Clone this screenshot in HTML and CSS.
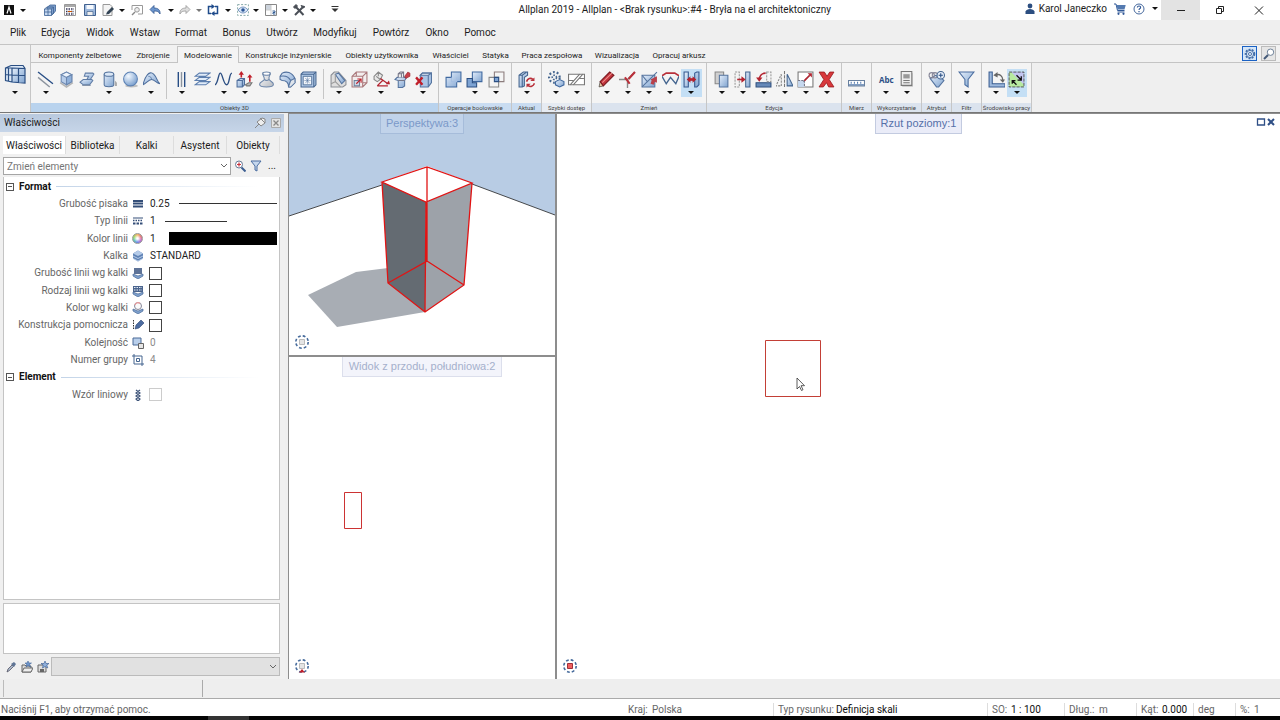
FILE: index.html
```html
<!DOCTYPE html>
<html lang="pl">
<head>
<meta charset="utf-8">
<title>Allplan 2019</title>
<link rel="stylesheet" href="styles.css">
</head>
<body>
<svg class="defs" aria-hidden="true">
  <defs>
    <linearGradient id="bl" x1="0" y1="0" x2="1" y2="1"><stop offset="0" stop-color="#e4eefb"/><stop offset="1" stop-color="#7fa3cf"/></linearGradient>
    <linearGradient id="gr" x1="0" y1="0" x2="1" y2="1"><stop offset="0" stop-color="#fff"/><stop offset="1" stop-color="#b4b8be"/></linearGradient>
    <radialGradient id="ball" cx=".35" cy=".3" r=".8"><stop offset="0" stop-color="#f2f8ff"/><stop offset="1" stop-color="#6f97c9"/></radialGradient>
    <symbol id="orbit" viewBox="0 0 16 16"><circle cx="8" cy="8" r="6.2" fill="none" stroke="#456a9b" stroke-width="1.6" stroke-dasharray="2.8 2.07"/></symbol>
    <symbol id="layer" viewBox="0 0 12 12"><path d="M1 7l5 2 5-2v2l-5 3-5-3z" fill="#7d9fcc" stroke="#4a6a98" stroke-width=".7"/></symbol>
  </defs>
</svg>
<div class="app">
  <header class="titlebar">
    <div class="quick">
      <button aria-label="Allplan"><svg class="i12" viewBox="0 0 12 12"><path fill="#111" d="M1 1h10v10H1z"/><path d="M4 9.5L6 3l2 6.500" fill="none" stroke="#fff" stroke-width="1.2"/></svg></button>
      <button class="arr" aria-label="Menu"></button>
      <i></i>
      <button aria-label="Projekt"><svg class="i12" viewBox="0 0 12 12"><path d="M3 3.500l3-2.500h5.500v6l-2.500 3H3z" fill="#7f9fcb" stroke="#3c6294" stroke-width=".8"/><path d="M.5 5h7v6.500h-7z" fill="#c5d8f0" stroke="#3c6294" stroke-width=".8"/><path d="M.5 5L3 3h6.500L7.500 5M9.500 3v6.500L7.500 11.500M.5 8h7M4 5v6.500" stroke="#3c6294" stroke-width=".8" fill="none"/></svg></button>
      <button aria-label="Rysunki"><svg class="i12" viewBox="0 0 12 12"><path d="M.5.5h11v11H.5z" fill="#fff" stroke="#999"/><path d="M1 2h10" stroke="#aaa" stroke-width="2"/><path d="M2 5h8M2 7.500h8M2 10h8" stroke="#335" stroke-width="1.500" stroke-dasharray="1.500 1"/><path d="M4 7.500h4" stroke="#c50"/></svg></button>
      <button aria-label="Zapisz"><svg class="i12" viewBox="0 0 12 12"><path d="M.5.5h11v11H.5z" fill="#9db8dc" stroke="#41618f"/><path d="M2.500 1h7v4h-7z" fill="#f6f9fd"/><path d="M3 7.500h6v4H3z" fill="#eee" stroke="#41618f" stroke-width=".7"/></svg></button>
      <button aria-label="Edytuj"><svg class="i12" viewBox="0 0 12 12"><path d="M1 .500h7l2 2v9H1z" fill="#f4f4f4" stroke="#999"/><path d="M5 8l5-5 2 2-5 5-3 .5z" fill="#345"/></svg></button>
      <button class="arr" aria-label="Więcej"></button>
      <button aria-label="Podgląd"><svg class="i12" viewBox="0 0 12 12"><path d="M1 6V1.500h10.500V10H7" fill="#fff" stroke="#999"/><path d="M1 11l3-3" stroke="#888" stroke-width="1.500"/><circle cx="6" cy="5.800" r="2.300" fill="#eee" stroke="#999"/></svg></button>
      <button aria-label="Cofnij"><svg class="i12" viewBox="0 0 12 12"><path d="M1 5.500L5 1.500v2.500c4 0 6.500 2 6 6C10 7.500 8 7 5 7v2.500z" fill="#6c95cd" stroke="#34588f" stroke-width=".8"/></svg></button>
      <button class="arr" aria-label="Lista cofania"></button>
      <button aria-label="Ponów"><svg class="i12" viewBox="0 0 12 12"><path d="M11 5.500L7 1.500v2.500C3 4 .5 6 1 10c1-2.500 3-3 6-3v2.500z" fill="#ddd" stroke="#999" stroke-width=".8"/></svg></button>
      <button class="arr pale" aria-label="Lista ponawiania"></button>
      <button aria-label="Odśwież"><svg class="i12" viewBox="0 0 12 12"><path d="M5 2.500H1.500v7H4M7 9.500h3.500v-7H8" fill="none" stroke="#1f4b8b" stroke-width="1.500"/><path d="M4.500 0v5L8 2.500zM7.500 7v5L4 9.500z" fill="#1f4b8b"/></svg></button>
      <button class="arr" aria-label="Więcej"></button>
      <button aria-label="Widoczność"><svg class="i12" viewBox="0 0 12 12"><path d="M.6.600h10.800v10.800H.6z" fill="none" stroke="#8aa" stroke-dasharray="2 1.500"/><path d="M1 6c3-4 7-4 10 0-3 4-7 4-10 0z" fill="#d8e6f7" stroke="#5a7eb0" stroke-width=".8"/><circle cx="6" cy="6" r="1.800" fill="#2a5596"/></svg></button>
      <button class="arr" aria-label="Więcej"></button>
      <button aria-label="Okna"><svg class="i12" viewBox="0 0 12 12"><path d="M.5.500h11v11H.5z" fill="#fff" stroke="#888"/><path d="M1 1h5v5H1z" fill="#ccd3dc"/><path d="M6 1v10M1 6h5" stroke="#ccc"/><path d="M7.500 7H10v1.500H8V10h2.500" fill="none" stroke="#335c94"/></svg></button>
      <button class="arr" aria-label="Więcej"></button>
      <button aria-label="Opcje"><svg class="i12" viewBox="0 0 12 12"><path d="M2 11l8-8M2 2l8.500 9" stroke="#4a4f57" stroke-width="2"/><path d="M.5 3L3 .5l1.500 1.500-2.500 2.500zM8 1l1 2 2 1 .5-2" fill="#4a4f57" stroke="#4a4f57"/></svg></button>
      <button class="arr" aria-label="Więcej"></button>
      <i></i>
      <button aria-label="Dostosuj pasek"><svg class="i12" viewBox="0 0 12 12"><path d="M2.500 2.500h7" stroke="#333"/><path d="M2.500 4.500h7L6 8z" fill="#333"/></svg></button>
    </div>
    <h1>Allplan 2019 - Allplan - &lt;Brak rysunku&gt;:#4 - Bryła na el architektoniczny</h1>
    <div class="account">
      <svg class="i12" viewBox="0 0 12 12"><circle cx="6" cy="3" r="2.400" fill="#2c4e80"/><path d="M1.500 11V8.500C2 7 4 6 6 6s4 1 4.500 2.500V11z" fill="#2c4e80"/></svg>
      <span>Karol Janeczko</span>
      <button aria-label="Sklep"><svg class="i12" viewBox="0 0 12 12"><path d="M0 1h2l1.500 6.500h7" fill="none" stroke="#2f5796"/><path d="M2.500 2h9.200l-1.200 4.500h-7z" fill="#547ab0"/><path d="M3.500 9h7" stroke="#2f5796"/><circle cx="4.500" cy="10.800" r="1.100" fill="#2f5796"/><circle cx="9.500" cy="10.800" r="1.100" fill="#2f5796"/></svg></button>
      <button aria-label="Pomoc"><svg class="i12" viewBox="0 0 12 12"><circle cx="6" cy="6" r="5" fill="#fff" stroke="#46699e"/><path d="M4.300 4.500C4.500 2.500 7.800 2.600 7.600 4.600 7.500 5.500 6 5.700 6 7" fill="none" stroke="#2f5796" stroke-width="1.100"/><path d="M5.400 8h1.200v1.200H5.400z" fill="#2f5796"/></svg></button>
      <button class="arr" aria-label="Więcej"></button>
    </div>
    <div class="wctl">
      <button class="min" aria-label="Minimalizuj"><svg class="i12" viewBox="0 0 12 12"><path d="M2 6.500h8" stroke="#222"/></svg></button>
      <button aria-label="Przywróć"><svg class="i12" viewBox="0 0 12 12"><path d="M2.500 4.500h5v5h-5zM4.500 4.500v-2h5v5h-2" fill="none" stroke="#222"/></svg></button>
      <button aria-label="Zamknij"><svg class="i12" viewBox="0 0 12 12"><path d="M2 2.500l8 8M10 2.500l-8 8" stroke="#222"/></svg></button>
    </div>
  </header>

  <nav class="menu">
    <button>Plik</button><button>Edycja</button><button>Widok</button><button>Wstaw</button><button>Format</button><button>Bonus</button><button>Utwórz</button><button>Modyfikuj</button><button>Powtórz</button><button>Okno</button><button>Pomoc</button>
  </nav>

  <section class="ribbon">
    <button class="role" aria-label="Rola"><svg class="i22" viewBox="0 0 22 22"><path d="M1 4l6-3h12l2 3v14l-2 1H8l-7-2z" fill="#dce8f7"/><path d="M8 4l13 .500V19L8 18z" fill="url(#bl)"/><path d="M1.500 4L7 1.500h12L21 4.500V19L8 18l-6.500-1.500zM8 4v14M1.500 4L8 4l13 .500M14.500 4.500v14M1.500 10.500L8 11l13 .500M4.500 4v13" fill="none" stroke="#2b4f83" stroke-width="1.200"/></svg><b></b></button>
    <div class="rmain">
      <div class="tabs">
        <button>Komponenty żelbetowe</button><button>Zbrojenie</button><button class="on">Modelowanie</button><button>Konstrukcje inżynierskie</button><button>Obiekty użytkownika</button><button>Właściciel</button><button>Statyka</button><button>Praca zespołowa</button><button>Wizualizacja</button><button>Opracuj arkusz</button>
        <div class="tools">
          <button class="sel" aria-label="Ustawienia"><svg class="i12" viewBox="0 0 12 12"><circle cx="6" cy="6" r="4.500" fill="none" stroke="#456fa8" stroke-width="1.600" stroke-dasharray="2 1.200"/><circle cx="6" cy="6" r="3.600" fill="#d8e5f5" stroke="#456fa8"/><circle cx="6" cy="6" r="1.500" fill="#fff" stroke="#456fa8"/></svg></button>
          <button aria-label="Szukaj"><svg class="i12" viewBox="0 0 12 12"><circle cx="7.500" cy="4.200" r="3.200" fill="#fff" stroke="#6f8299"/><path d="M5 7l-4 4" stroke="#445a78" stroke-width="2"/></svg></button>
        </div>
      </div>
      <div class="groups">
        <div class="group blue wide">
          <div class="row">
            <div class="sub n6">
              <button aria-label="Linia"><svg class="i17" viewBox="0 0 16 16"><path d="M1 1l14 11" stroke="#274d85" stroke-width="1.300"/><path d="M1 6l11 9" stroke="#8b939e" stroke-width="1.300"/></svg><b></b></button>
              <button aria-label="Prostopadłościan"><svg class="i17" viewBox="0 0 16 16"><path d="M2 11l6 4 6-4" stroke="#b5b5b5" stroke-width="1.500" fill="none"/><path d="M3 3.500L8 1l5 2.500V10l-5 3-5-3z" fill="#b7cdea" stroke="#6c88b0"/><path d="M3 3.500L8 1l5 2.500L8 6z" fill="#edf4fc" stroke="#6c88b0"/><path d="M8 6l5-2.500V10l-5 3z" fill="#8fb0da" stroke="#6c88b0"/></svg></button>
              <button aria-label="Płaszczyzna"><svg class="i17" viewBox="0 0 16 16"><path d="M6 2h7l1 1-4 6H7l2-4H5z" fill="url(#bl)" stroke="#5f7ca6"/><path d="M1 10.500L4 8h8l1 1-3 4H4z" fill="url(#bl)" stroke="#5f7ca6"/><path d="M3 13.500h8" stroke="#7b8ba2"/></svg></button>
              <button aria-label="Walec"><svg class="i17" viewBox="0 0 16 16"><path d="M3 3v10c0 2.500 9 2.500 9 0V3" fill="url(#bl)" stroke="#55749f"/><ellipse cx="7.500" cy="3" rx="4.500" ry="2" fill="#dbe7f6" stroke="#55749f"/><path d="M13 9l2 2v3h-2" fill="#aaa"/></svg><b></b></button>
              <button aria-label="Kula"><svg class="i17" viewBox="0 0 16 16"><ellipse cx="9" cy="14" rx="6" ry="1.500" fill="#c0c0c0"/><circle cx="8" cy="7.500" r="6.500" fill="url(#ball)" stroke="#5e83b5"/></svg></button>
              <button aria-label="Powierzchnia"><svg class="i17" viewBox="0 0 16 16"><path d="M0 13C2 5 6-1 10 3s3 7 6 9c-4-1-5-4-8-4s-5 4-8 5z" fill="url(#bl)" stroke="#4e6e9c"/><path d="M5 5c2 0 3 1 3 3" fill="none" stroke="#4e6e9c" stroke-width=".7"/></svg><b></b></button>
            </div>
            <div class="sub n7">
              <button aria-label="Linie równoległe"><svg class="i17" viewBox="0 0 16 16"><path d="M5 1v14M11 1v14" stroke="#274d85" stroke-width="1.300"/><path d="M8 1v14" stroke="#8b939e" stroke-width="1.300"/></svg><b></b></button>
              <button aria-label="Warstwy"><svg class="i17" viewBox="0 0 16 16"><path d="M5 2h10l-4 3H1zM5 6h10l-4 3H1zM5 10h10l-4 3H1z" fill="#e1ecf9" stroke="#5c7eae"/></svg></button>
              <button aria-label="Krzywa"><svg class="i17" viewBox="0 0 16 16"><path d="M0 13C3 12 3 2 5 2s3 11 6 11 2-11 5-11" fill="none" stroke="#2c4f83" stroke-width="1.300"/></svg><b></b></button>
              <button aria-label="Wyciągnięcie"><svg class="i17" viewBox="0 0 16 16"><path d="M1 9l3-2h4v6l-2 2H1zM1 9h5v6M6 9l2-2" fill="url(#bl)" stroke="#4e6e9c"/><path d="M9 13l3-2h3l-2 3h-3z" fill="#bbb" stroke="#777"/><path d="M5 6V2M13 10V5" stroke="#c01f2a" stroke-width="1.500"/><path d="M2.500 3.500L5 0l2.500 3.500zM10.500 6L13 3l2.500 3z" fill="#c01f2a"/></svg><b></b></button>
              <button aria-label="Obrót"><svg class="i17" viewBox="0 0 16 16"><path d="M4.500 2h7c0 3-2 3-1 6 1 2 4 2 4 4.500 0 3.500-13 3.500-13 0C1.500 10 5 10 6 8c0-3-1.500-3-1.500-6z" fill="url(#gr)" stroke="#6e87aa"/><ellipse cx="8" cy="2.500" rx="3.500" ry="1.500" fill="#fff" stroke="#6e87aa"/><path d="M6 8c1 1 3 1 4.500 0" fill="none" stroke="#6e87aa"/></svg></button>
              <button aria-label="Przesunięcie po ścieżce"><svg class="i17" viewBox="0 0 16 16"><path d="M1 5l2-3c4-2 9-1 12 5v4l-4 4H9c0-4-2-6-6-6L1 8z" fill="url(#bl)" stroke="#4e6e9c"/><path d="M15 7l-4 2-2 6M1 5c5-1 8 0 10 4" fill="none" stroke="#4e6e9c"/><path d="M11 9l4-2v4l-4 4H9z" fill="#dfe5ec" stroke="#4e6e9c" stroke-width=".8"/></svg><b></b></button>
              <button aria-label="Siatka"><svg class="i17" viewBox="0 0 16 16"><path d="M1 3l2-2h12v12l-2 2H1z" fill="#b4cbe8" stroke="#44658f"/><path d="M1 3h12v12M13 3l2-2" fill="none" stroke="#44658f"/><path d="M3 5h8v8H3z" fill="#f5f8fc" stroke="#44658f" stroke-width=".8"/><path d="M5 6.500l4 5M9 6.500l-4 5M7 6v6M4 9h6" stroke="#54749f" stroke-width=".5"/></svg><b></b></button>
            </div>
            <div class="sub n5">
              <button aria-label="Bryła"><svg class="i17" viewBox="0 0 16 16"><path d="M1 4l3-3h4l7 8v4l-3 2H1z" fill="#dedede" stroke="#8b8f96"/><path d="M5 3l3-1 6 7-3 3z" fill="url(#bl)" stroke="#55749f"/><path d="M1 12l4-2V3M5 10l5 5" fill="none" stroke="#999"/></svg><b></b></button>
              <button aria-label="Skaluj bryłę"><svg class="i17" viewBox="0 0 16 16"><path d="M1 5l4-4h10v10l-4 4H1z" fill="#f3eeee"/><path d="M1 5l4-4h10v10l-4 4H1zM1 5h10v10M11 5l4-4M5 1v4M11 11h4" fill="none" stroke="#a9777a"/><path d="M3 9h5v5H3z" fill="#ccd8e8" stroke="#70829b"/><path d="M5 12l4-4M9.500 11V7.500H6" fill="none" stroke="#c01f2a"/></svg></button>
              <button aria-label="Kąt"><svg class="i17" viewBox="0 0 16 16"><path d="M1 5l4-4 4 3-2 4-3 2-3-2zM3 5l4 3M5 1v4" fill="#e8e8e8" stroke="#888"/><path d="M4 14h10M7 7l7 5M4 14l5-5" fill="none" stroke="#b3232f" stroke-width="1.200"/><path d="M12 12.500h4L15 9z" fill="#b3232f"/></svg><b></b></button>
              <button aria-label="Edytuj bryłę"><svg class="i17" viewBox="0 0 16 16"><path d="M1 8l2-2h9l-2 3v5l-2 1.500H4V9z" fill="url(#bl)" stroke="#55749f"/><path d="M4 6V2.500L6 1h3v5M4 9h6M4 2.500h3L9 1M7 3v3" fill="#eee" stroke="#778"/><path d="M10 5l3-4 2 1v3l-4 2z" fill="#c8404a" stroke="#9a2730" stroke-width=".6"/></svg></button>
              <button aria-label="Usuń bryłę"><svg class="i17" viewBox="0 0 16 16"><path d="M5 4l2-2h8.500v9l-3 4H5z" fill="#aac4e5" stroke="#55749f"/><path d="M5 4l2-2h8.500l-3 2z" fill="#e8f0fa" stroke="#55749f"/><path d="M12.500 4v11" stroke="#55749f"/><path d="M1 6l6 7M7 6l-6 7" stroke="#c01f2a" stroke-width="2.200"/></svg><b></b></button>
            </div>
          </div>
          <span>Obiekty 3D</span>
        </div>
        <div class="group blue2 n3">
          <div class="row">
            <button aria-label="Suma"><svg class="i17" viewBox="0 0 16 16"><path d="M6 1h9v9h-4v5H1V6h5z" fill="url(#bl)" stroke="#3f689f"/><path d="M6 6v4h5V6" fill="none" stroke="#a5bfe2"/></svg></button>
            <button aria-label="Różnica"><svg class="i17" viewBox="0 0 16 16"><path d="M6 1h9v9H6z" fill="url(#bl)" stroke="#3f689f"/><path d="M1 7h5v4h4v4H1z" fill="#7da3d3" stroke="#2b4f83"/></svg><b></b></button>
            <button aria-label="Część wspólna"><svg class="i17" viewBox="0 0 16 16"><path d="M6 1h9v9H6z" fill="#f4f4f4" stroke="#8b7c7c"/><path d="M1 6h9v9H1z" fill="#f4f4f4" stroke="#888"/><path d="M6 6h4v4H6z" fill="#7da3d3" stroke="#2b4f83"/></svg><b></b></button>
          </div>
          <span>Operacje boolowskie</span>
        </div>
        <div class="group blue2 n1">
          <div class="row"><button aria-label="Aktualizuj"><svg class="i17" viewBox="0 0 16 16"><path d="M1 4l4-3h4v3L6 6v8l-2 1H1zM1 4h3v11M4 4l4-3" fill="url(#bl)" stroke="#44658f"/><path d="M8 10c1-3 4-4 6-2M15.500 11.500c-1 3-4 4-6 2" fill="none" stroke="#b9303a" stroke-width="1.500"/><path d="M11.500 9.500h4V6zM12 12H8v3.500z" fill="#b9303a"/></svg><b></b></button></div>
          <span>Aktual</span>
        </div>
        <div class="group plain n2">
          <div class="row">
            <button aria-label="Punkty"><svg class="i17" viewBox="0 0 16 16"><circle cx="6" cy="6" r="5" fill="none" stroke="#44658f" stroke-width="2" stroke-dasharray="1.700 1.900"/><circle cx="6" cy="6" r="2" fill="none" stroke="#44658f" stroke-width="1.500" stroke-dasharray="1.500 1"/><path d="M7 10l4-2 4 2v3l-4 2-4-2z" fill="url(#bl)" stroke="#3f689f"/></svg><b></b></button>
            <button aria-label="Szraf"><svg class="i17" viewBox="0 0 16 16"><path d="M.5 3h15v10H.5z" fill="#fff" stroke="#777"/><path d="M2 13L11 3M5 13l9-10M1 9h4M11 7h4" stroke="#777"/></svg><b></b></button>
          </div>
          <span>Szybki dostęp</span>
        </div>
        <div class="group dim n5">
          <div class="row">
            <button aria-label="Ołówek"><svg class="i17" viewBox="0 0 16 16"><path d="M1 15l1-5 3 4z" fill="#e9c9a0" stroke="#333" stroke-width=".6"/><path d="M2 10L11 1l4 3-10 10z" fill="#c2343c" stroke="#7a1a20"/><path d="M4 11l9-9" stroke="#ee8c8c"/></svg><b></b></button>
            <button aria-label="Przytnij"><svg class="i17" viewBox="0 0 16 16"><path d="M0 8h8l7-7M8 8v8" fill="none" stroke="#888" stroke-width="1.300"/><path d="M5.500 6l2.500 3 2 3M9 7.500L15 1" stroke="#b9303a" stroke-width="2" fill="none"/></svg><b></b></button>
            <button aria-label="Modyfikuj kształt"><svg class="i17" viewBox="0 0 16 16"><path d="M1 4h12v11H1z" fill="url(#bl)" stroke="#55749f"/><path d="M1 4l5 6 9-9M1 15l5-5" fill="none" stroke="#55749f"/><path d="M9 8l6-3v6l-2-1-1 3-3-1 1-3z" fill="#b9404a"/></svg><b></b></button>
            <button aria-label="Punkty modyfikacji"><svg class="i17" viewBox="0 0 16 16"><path d="M0 4.500L4 2h8l4 2.500" fill="none" stroke="#b9303a" stroke-width="1.500"/><path d="M0 5l4 7 4-6 5 6 3-7" fill="none" stroke="#44658f" stroke-width="1.300"/></svg><b></b></button>
            <button class="act" aria-label="Odstęp"><svg class="i17" viewBox="0 0 16 16"><path d="M1 1h4v14H1zM11 2l2-1h2v12l-2 2h-2z" fill="url(#bl)" stroke="#35598f"/><path d="M5 8h6" stroke="#b3232f" stroke-width="2.500"/><path d="M3.500 8L7 5v6zM12.500 8L9 5v6z" fill="#b3232f"/></svg><b></b></button>
          </div>
          <span>Zmień</span>
        </div>
        <div class="group dim n6">
          <div class="row">
            <button aria-label="Kopiuj"><svg class="i17" viewBox="0 0 16 16"><path d="M2 1h8v11H2z" fill="#d0d0d0" stroke="#888"/><path d="M6 4h8v11H6z" fill="url(#bl)" stroke="#55749f"/></svg><b></b></button>
            <button aria-label="Przesuń"><svg class="i17" viewBox="0 0 16 16"><path d="M1 1h4v14H1z" fill="none" stroke="#999" stroke-dasharray="2 1"/><path d="M11 1h4v14h-4z" fill="url(#bl)" stroke="#44658f"/><path d="M3 8h5" stroke="#b3232f" stroke-width="1.500"/><path d="M7 5l4 3-4 3z" fill="#b3232f"/></svg><b></b></button>
            <button aria-label="Obróć"><svg class="i17" viewBox="0 0 16 16"><path d="M1 11h14v4H1z" fill="#6689b8" stroke="#2f4f7e"/><path d="M11 1h4v9h-4z" fill="none" stroke="#999" stroke-dasharray="2 1"/><path d="M10 2C6 2 5 4 4 7" fill="none" stroke="#b3232f" stroke-width="1.500"/><path d="M1 6l6 0-3 4z" fill="#b3232f"/></svg><b></b></button>
            <button aria-label="Odbij"><svg class="i17" viewBox="0 0 16 16"><path d="M5 3v11H0z" fill="none" stroke="#888" stroke-dasharray="2 1"/><path d="M8 0v16" stroke="#777" stroke-dasharray="3 1"/><path d="M10.500 3v11H16z" fill="url(#bl)" stroke="#44658f"/></svg><b></b></button>
            <button aria-label="Skaluj"><svg class="i17" viewBox="0 0 16 16"><path d="M1 1h14v14H1z" fill="#fff" stroke="#777"/><path d="M1 9h6v6H1z" fill="#c6d8ee"/><path d="M1 9h6v6M6 10l7-7" fill="none" stroke="#778" stroke-dasharray="2 1"/><path d="M7 9l5-5" stroke="#b3232f" stroke-width="1.500"/><path d="M10 2h4v4z" fill="#b3232f"/></svg><b></b></button>
            <button aria-label="Usuń"><svg class="i17" viewBox="0 0 16 16"><path d="M1 1h5l2.500 4L11 1h4l-4.500 7L15 15h-5l-2-4-3 4H1l4.500-7z" fill="#d8383c" stroke="#9b1c20" stroke-width=".8"/></svg><b></b></button>
          </div>
          <span>Edycja</span>
        </div>
        <div class="group dim n1">
          <div class="row"><button aria-label="Mierz"><svg class="i17" viewBox="0 0 16 16"><path d="M.5 9h15v5H.5z" fill="#fff" stroke="#68809f"/><path d="M3 10v2M6 10v2M9 10v2M12 10v2M1 13h14" stroke="#557cb0"/></svg><b></b></button></div>
          <span>Mierz</span>
        </div>
        <div class="group dim n2">
          <div class="row">
            <button aria-label="Tekst"><em>Abc</em><b></b></button>
            <button aria-label="Raport"><svg class="i17" viewBox="0 0 16 16"><path d="M4 2h10v13H4z" fill="#ccc"/><path d="M3 .500h10v13H3z" fill="#eee" stroke="#777"/><path d="M5 3h6v4H5z" fill="#999"/><path d="M5 9h6M5 11h6" stroke="#777"/></svg><b></b></button>
          </div>
          <span>Wykorzystanie</span>
        </div>
        <div class="group dim n1">
          <div class="row"><button aria-label="Atrybut"><svg class="i17" viewBox="0 0 16 16"><path d="M2 7l5-3 6 3 2 2-5 6H8z" fill="url(#bl)" stroke="#55749f"/><circle cx="3.500" cy="4" r="2.500" fill="none" stroke="#889"/><circle cx="6.500" cy="4" r="2.500" fill="none" stroke="#889"/><circle cx="12" cy="4" r="3.500" fill="#e7effa" stroke="#44658f"/><path d="M10 4h4M12 2v4" stroke="#2b4f83"/></svg><b></b></button></div>
          <span>Atrybut</span>
        </div>
        <div class="group dim n1">
          <div class="row"><button aria-label="Filtr"><svg class="i17" viewBox="0 0 16 16"><path d="M1 1h14l-5.500 7v7l-3-2V8z" fill="url(#bl)" stroke="#4a6da0"/></svg><b></b></button></div>
          <span>Filtr</span>
        </div>
        <div class="group dim n2">
          <div class="row">
            <button aria-label="Układ współrzędnych"><svg class="i17" viewBox="0 0 16 16"><path d="M1 1h3v11h12v3H1z" fill="#9db8dc" stroke="#3c5f92"/><path d="M7 4c4-2 7 1 7 5" fill="none" stroke="#666" stroke-width="1.300"/><path d="M9 1v5L5 4zM11 8h5l-2 3z" fill="#666"/></svg><b></b></button>
            <button class="act" aria-label="Okno widoku"><svg class="i17" viewBox="0 0 16 16"><path d="M1 1h14v14H1z" fill="#b7eaa1"/><path d="M3 1h12v12z" fill="#c3c6f1"/><path d="M1 1h14v14H1z" fill="none" stroke="#444" stroke-width=".8" stroke-dasharray="3 1"/><path d="M8 4l4 4M12.500 5v3.500H9M8 13L4 9M4 12V9h3" fill="none" stroke="#111" stroke-width="1.200"/></svg><b></b></button>
          </div>
          <span>Środowisko pracy</span>
        </div>
      </div>
    </div>
  </section>

  <main class="work">
    <aside class="panel">
      <div class="phead"><h2>Właściwości</h2>
        <svg class="i12" viewBox="0 0 12 12"><path d="M1 11l4-4M3 5l4 4 4-3V2L8 1z" fill="#eee" stroke="#888"/><path d="M6 1l5 5" stroke="#888"/></svg>
        <button aria-label="Zamknij panel"><svg class="i10" viewBox="0 0 10 10"><path d="M.5.500h9v9h-9z" fill="#e3e3e3" stroke="#aaa"/><path d="M2.500 2.500l5 5M7.500 2.500l-5 5" stroke="#888" stroke-width="1.300"/></svg></button>
      </div>
      <div class="ptabs"><button class="on">Właściwości</button><button>Biblioteka</button><button>Kalki</button><button>Asystent</button><button>Obiekty</button></div>
      <div class="pfilter">
        <select aria-label="Elementy"><option>Zmień elementy</option></select>
        <button aria-label="Powiększ"><svg class="i12" viewBox="0 0 12 12"><circle cx="5" cy="4.500" r="3.500" fill="#fff" stroke="#657895"/><path d="M7.500 7.500l4 4" stroke="#3d5f92" stroke-width="2"/><path d="M3 4.500h4M5 2.500v4" stroke="#c9303a" stroke-width="1.200"/></svg></button>
        <button aria-label="Filtruj"><svg class="i12" viewBox="0 0 12 12"><path d="M1 1h10L7 6v5l-2-1V6z" fill="#c5d7ee" stroke="#4a6da0"/></svg></button>
        <button aria-label="Więcej">...</button>
      </div>
      <div class="props">
        <div class="prow head"><button aria-label="Zwiń Format"></button><strong>Format</strong><hr></div>
        <div class="prow"><span>Grubość pisaka</span><svg class="i12" viewBox="0 0 12 12"><path d="M1 3h10M1 5.500h10M1 8.500h10" stroke="#344e78" stroke-width="1.800"/></svg><output>0.25</output><hr class="pen"></div>
        <div class="prow"><span>Typ linii</span><svg class="i12" viewBox="0 0 12 12"><path d="M1 3h10" stroke="#344e78"/><path d="M1 5.500h10" stroke="#344e78" stroke-width="1.500" stroke-dasharray="1.500 1"/><path d="M1 8.500h10" stroke="#344e78" stroke-width="2" stroke-dasharray="2.500 1"/></svg><output>1</output><hr class="pen short"></div>
        <div class="prow"><span>Kolor linii</span><i class="wheel"></i><output>1</output><div class="swatch"></div></div>
        <div class="prow"><span>Kalka</span><svg class="i12" viewBox="0 0 12 12"><path d="M1 3.500l5-3 5 3v5l-5 3-5-3z" fill="#5f82b5"/><path d="M1 3.500l5 2.500 5-2.500-5-3z" fill="#b4cae8"/><path d="M1 6l5 2.500L11 6M1 8.500L6 11l5-2.500" fill="none" stroke="#c8daf2" stroke-width=".8"/></svg><output>STANDARD</output></div>
        <div class="prow"><label for="c1">Grubość linii wg kalki</label><svg class="i12" viewBox="0 0 12 12"><path d="M2 1h8v6H2z" fill="#5e7397"/><use href="#layer"/></svg><input type="checkbox" id="c1"></div>
        <div class="prow"><label for="c2">Rodzaj linii wg kalki</label><svg class="i12" viewBox="0 0 12 12"><path d="M1 1h10v6H1z" fill="#4b658e"/><path d="M2 2.500h8M2 5h8" stroke="#e4ecf6" stroke-dasharray="1.500 1"/><use href="#layer"/></svg><input type="checkbox" id="c2"></div>
        <div class="prow"><label for="c3">Kolor wg kalki</label><svg class="i12" viewBox="0 0 12 12"><use href="#layer"/><circle cx="6" cy="4" r="3.500" fill="#fafafa" stroke="#889"/><path d="M3 3a3 3 0 0 1 5-1.500" fill="none" stroke="#eb9a9a" stroke-width="1.200"/></svg><input type="checkbox" id="c3"></div>
        <div class="prow"><label for="c4">Konstrukcja pomocnicza</label><svg class="i12" viewBox="0 0 12 12"><path d="M1.500 1v10" stroke="#333" stroke-dasharray="1.500 1"/><path d="M3 10l1-4 5-5 3 3-5 5z" fill="#4d6ca0" stroke="#2b4675" stroke-width=".6"/></svg><input type="checkbox" id="c4"></div>
        <div class="prow"><span>Kolejność</span><svg class="i12" viewBox="0 0 12 12"><path d="M1 1h8v7H1z" fill="#b9cfeb" stroke="#4a6a98"/><path d="M6.500 6.500h5v5h-5z" fill="#e6e6e6" stroke="#666"/></svg><output class="off">0</output></div>
        <div class="prow"><span>Numer grupy</span><svg class="i12" viewBox="0 0 12 12"><path d="M2 0v10h10M0 2h10v10" fill="none" stroke="#44658f"/><path d="M4.500 4.500h3v3h-3z" fill="#fff" stroke="#44658f"/></svg><output class="off">4</output></div>
        <div class="prow head"><button aria-label="Zwiń Element"></button><strong>Element</strong><hr></div>
        <div class="prow"><label for="c5">Wzór liniowy</label><svg class="i12" viewBox="0 0 12 12"><path d="M4 1l4 3-4 3 4 3-2 2M8 1L4 4l4 3-4 3 2 2" fill="none" stroke="#3f557a" stroke-width="1.200"/></svg><input type="checkbox" id="c5" disabled></div>
      </div>
      <div class="note"></div>
      <div class="pfoot">
        <button aria-label="Pobierz"><svg class="i12" viewBox="0 0 12 12"><path d="M2 11l1-3 4-4 1.500 1.500-4 4z" fill="#a9b6c8" stroke="#556" stroke-width=".8"/><path d="M6 3l3 3 2-3L9 1z" fill="#5f7596"/></svg></button>
        <button aria-label="Otwórz ulubione"><svg class="i12" viewBox="0 0 12 12"><path d="M1 11V4h3l1 1h5v6z" fill="#ddd" stroke="#666"/><path d="M1 11l2-4h9l-2 4z" fill="#eee" stroke="#666"/><path d="M7 0l1 2h2.500L8.500 3.500l1 2.500L7 4.500 5 6l.7-2.500L4 2h2z" fill="#6d94ca" stroke="#35598f" stroke-width=".5"/></svg></button>
        <button aria-label="Zapisz ulubione"><svg class="i12" viewBox="0 0 12 12"><path d="M1 4h8v7H1z" fill="#ddd" stroke="#666"/><path d="M3 8h4v3H3z" fill="#666"/><path d="M8 0l1 2.500h3L9.800 4l1 3L8 5.500 5.500 7l.7-3L4 2.500h3z" fill="#8fb0dc" stroke="#35598f" stroke-width=".6"/></svg></button>
        <select aria-label="Ulubione" disabled><option></option></select>
      </div>
    </aside>

    <div class="views">
      <div class="left">
        <section class="view persp">
          <svg class="scene" viewBox="0 1 266 241" preserveAspectRatio="none">
            <path d="M0 0h266v102L183 71 138 53 93 72 0 103z" fill="#b8cce4"/>
            <path d="M0 103l93-31M183 71l83 31" stroke="#222" stroke-width=".8" fill="none"/>
            <path d="M19 182l48-23 40-5 29 45-88 15z" fill="#a8adb4"/>
            <path d="M93 69l45-16 45 17-46 19z" fill="#fff"/>
            <path d="M93 69l44 20-1 110-37-29z" fill="#646b72"/>
            <path d="M183 70l-46 19-1 110 39-27z" fill="#9da2a9"/>
            <path d="M93 69l45-15 45 16-46 19zM93 69l6 101 37 29 39-27 8-102M137 89l-1 110M138 54v94l-39 22M138 148l37 24M137.500 89v60" fill="none" stroke="#e11414" stroke-width="1.300"/>
          </svg>
          <span class="vtitle clear">Perspektywa:3</span>
          <svg class="orb" viewBox="0 0 16 16"><use href="#orbit"/><path d="M5.500 5.500h5v5h-5z" fill="#e4e4e4" stroke="#bbb"/></svg>
        </section>
        <section class="view front">
          <svg class="scene" viewBox="0 0 266 322" preserveAspectRatio="none"><path d="M55.500 135.500h17v36h-17z" fill="none" stroke="#cc3333"/></svg>
          <span class="vtitle pale">Widok z przodu, południowa:2</span>
          <svg class="orb" viewBox="0 0 16 16"><use href="#orbit"/><path d="M5.500 5.500h5v5h-5z" fill="#e4e4e4" stroke="#bbb"/><path d="M5 14.500l3-3.500 3 3.500z" fill="#c01f2a"/></svg>
        </section>
      </div>
      <section class="view plan">
        <svg class="scene" viewBox="0 0 723 565" preserveAspectRatio="none"><path d="M208.500 226.500h55v56h-55z" fill="none" stroke="#c33f36"/><path d="M240 264v11l2.500-2.500 2 4 1.500-.800-2-4h3.500z" fill="#fff" stroke="#333" stroke-width=".8"/></svg>
        <span class="vtitle">Rzut poziomy:1</span>
        <div class="vctl">
          <button aria-label="Maksymalizuj widok"><svg class="i10" viewBox="0 0 10 10"><path d="M1.500 2h7v6h-7z" fill="#fff" stroke="#2f4f86" stroke-width="1.300"/></svg></button>
          <button aria-label="Zamknij widok"><svg class="i10" viewBox="0 0 10 10"><path d="M2 2l6 6M8 2L2 8" stroke="#2f4f86" stroke-width="2"/></svg></button>
        </div>
        <svg class="orb" viewBox="0 0 16 16"><use href="#orbit"/><path d="M5.500 5.500h5v5h-5z" fill="#f06060" stroke="#a03038"/></svg>
      </section>
    </div>
  </main>

  <div class="dock"><div></div></div>
  <footer class="status">
    <span>Naciśnij F1, aby otrzymać pomoc.</span>
    <span>Kraj:</span><span>Polska</span>
    <span class="s">Typ rysunku:</span><b>Definicja skali</b>
    <span class="s">SO:</span><b>1 : 100</b>
    <span class="s">Dług.:</span><span>m</span>
    <span class="s">Kąt:</span><b>0.000</b>
    <span class="s">deg</span>
    <span class="s">%:</span><span>1</span>
  </footer>
  <div class="task"><i></i></div>
</div>
</body>
</html>
```
FILE: styles.css
```css
* { box-sizing: border-box; }
body { margin: 0; font: 10px/14px Roboto, "Open Sans", sans-serif; color: #1c1c1c; background: #efefef; }
button { appearance: none; border: 0; padding: 0; margin: 0; background: none; font: inherit; color: inherit; white-space: nowrap; display: flex; align-items: center; justify-content: center; }
svg { display: block; flex: none; }
h1, h2 { margin: 0; font: inherit; white-space: nowrap; }
.defs { position: absolute; width: 0; height: 0; }
.i10 { width: 10px; height: 10px; }
.i12 { width: 12px; height: 12px; }
.i17 { width: 17px; height: 17px; }
.i22 { width: 22px; height: 22px; }

.app { height: 100vh; display: flex; flex-direction: column; overflow: hidden; }

.titlebar { flex: none; height: 20px; background: #fff; display: flex; align-items: stretch; }
.quick { display: grid; grid-template-columns: 18px 10px 12px 20px 20px 20px 16px 12px 18px 18px 14px 14px 14px 14px 16px 14px 12px 18px 10px 18px 10px 10px 14px; align-items: center; flex: none; }
.arr::after { content: ""; border: 3px solid transparent; border-top-color: #111; border-bottom: 0; }
.arr.pale::after { border-top-color: #777; }
.titlebar h1 { flex: 1; padding-right: 16px; text-align: center; line-height: 20px; }
.account { display: flex; align-items: center; gap: 3px; height: 17px; }
.account span { margin-right: 2px; }
.account button { width: 16px; }
.account .arr { width: 10px; }
.wctl { display: flex; margin: 0 2px 0 1px; }
.wctl button { width: 39px; }
.wctl .min { background: #e3e3e3; }

.menu { flex: none; height: 24px; padding: 1px 0 0 3px; display: grid; grid-template-columns: 30px 45px 44px 46px 46px 45px 46px 60px 52px 40px 46px; }

.ribbon { flex: none; display: flex; height: 69px; border-top: 1px solid #c4c4c4; border-bottom: 1px solid #777; background: #f1f1f1; }
.role { width: 31px; flex-direction: column; gap: 5px; border-right: 1px solid #c6c6c6; }
.role b, .row b { border: 3px solid transparent; border-top-color: #111; border-bottom: 0; }
.rmain { flex: 1; min-width: 0; display: flex; flex-direction: column; }
.tabs { height: 18px; display: grid; grid-template-columns: 98px 48px 62px 99px 88px 49px 41px 72px 58px 66px 1fr; border-bottom: 1px solid #c4c4c4; font-size: 8px; }
.tabs > button { padding-top: 3px; }
.tabs > .on { height: 18px; margin-top: 1px; padding: 1px 0 0; background: #f4f4f4; border: 1px solid #c4c4c4; border-bottom: 0; }
.tools { display: flex; justify-content: flex-end; gap: 4px; padding: 1px 4px 0 0; }
.tools button { width: 15px; height: 15px; border: 1px solid #bbb; background: #e6e6e6; }
.tools .sel { border: 1px solid #1b62c4; background: #d5e6f8; }
.groups { flex: 1; display: flex; background: #efefef; }
.group { flex: none; display: flex; flex-direction: column; border-right: 1px solid #c6c6c6; background: #f4f4f4; }
.group > span { height: 9px; font-size: 6px; line-height: 9px; text-align: center; white-space: nowrap; color: #444; background: #dbe3ee; }
.group.blue > span { background: #b9d3ee; }
.group.blue2 > span { background: #c9dcf1; }
.group.plain > span { background: #e6ebf2; }
.row { flex: 1; display: flex; padding: 6px 4px 4px; }
.wide .row { padding: 6px 0 4px; }
.sub { display: flex; padding: 0 4px; }
.sub + .sub { border-left: 1px solid #c6c6c6; }
.n1 { width: 30px; }
.n2 { width: 50px; }
.n3 { width: 73px; }
.n5 { width: 115px; }
.n6 { width: 135px; }
.n7 { width: 157px; }
.row button { flex: 1; min-width: 0; height: 28px; flex-direction: column; justify-content: flex-start; gap: 3px; padding-top: 2px; }
.row .act { background: #c4dff5; }
.row em { height: 17px; font: bold 8px/18px "Open Sans", sans-serif; color: #2d4f85; }

.work { flex: 1; min-height: 0; display: flex; }
.panel { flex: none; width: 285px; padding: 1px 5px 3px 3px; display: flex; flex-direction: column; background: #f0f0f0; }
.phead { display: flex; align-items: center; gap: 5px; height: 18px; margin: 0 -4px 0 -3px; padding: 0 3px 0 4px; background: linear-gradient(#b9c9de, #c6d5e8); }
.phead h2 { flex: 1; }
.ptabs { display: grid; grid-template-columns: 63px 54px 54px 53px 1fr; height: 18px; margin-top: 4px; }
.ptabs button { padding-top: 2px; border-right: 1px solid #ddd; }
.ptabs .on { background: #fff; }
.pfilter { display: flex; align-items: center; gap: 2px; height: 18px; margin-top: 3px; }
select { appearance: none; margin: 0; border: 1px solid #a5a5a5; border-radius: 0; height: 18px; flex: none; font: inherit; color: #757575; padding: 2px 3px 0; background: #fff url("data:image/svg+xml,%3Csvg xmlns='http://www.w3.org/2000/svg' width='8' height='6'%3E%3Cpath d='M1 1l3 3 3-3' fill='none' stroke='%23666'/%3E%3C/svg%3E") no-repeat right 2px center; }
.pfilter select { width: 228px; }
.pfilter button { width: 14px; }
.props { flex: 1; min-height: 0; margin-top: 2px; padding-top: 1px; background: #fff; border: 1px solid #c4c4c4; border-top: 0; overflow: hidden; }
.prow { display: grid; grid-template-columns: 124px 12px auto 1fr; column-gap: 4px; align-items: center; height: 17px; padding-right: 2px; }
.prow:nth-child(3n) { height: 18px; }
.prow > span, .prow > label { text-align: right; color: #666; white-space: nowrap; }
.prow output { margin-left: 2px; }
.prow .off { color: #8a8a8a; }
.prow.head { display: flex; gap: 5px; padding: 0 20px 0 2px; }
.head button { width: 8px; height: 8px; border: 1px solid #555; background: linear-gradient(#555, #555) center / 4px 1px no-repeat; }
.head strong { color: #111; }
.head hr { flex: 1; height: 1px; margin: 0; border: 0; background: linear-gradient(90deg, #c3d4e8, #fff); }
hr.pen { width: auto; margin: 0 0 0 5px; border: 0; height: 1px; background: #333; }
hr.short { margin-right: 50px; }
.swatch { height: 13px; background: #000; margin-left: 9px; }
.wheel { width: 11px; height: 11px; border-radius: 50%; border: 1px solid #999; background: radial-gradient(#fff 10%, transparent 60%), conic-gradient(#f4b26a, #e67878, #c36fd0, #6a86e8, #5fc7b8, #a5d55f, #f4b26a); }
input[type="checkbox"] { appearance: none; width: 13px; height: 13px; margin: 0 0 0 1px; border: 1px solid #444; background: #fff; }
input[type="checkbox"]:disabled { border-color: #ccc; }
.note { flex: none; height: 51px; margin-top: 3px; background: #fff; border: 1px solid #c4c4c4; }
.pfoot { display: flex; align-items: center; height: 19px; margin-top: 3px; }
.pfoot button { width: 16px; }
.pfoot select { flex: 1; height: 19px; background-color: #e1e1e1; border-color: #bbb; opacity: 1; }

.views { flex: 1; min-width: 0; display: grid; grid-template-columns: 266px 1fr; gap: 2px; margin-left: 3px; padding: 1px 0 0 1px; background: #8d8d8d; }
.left { display: grid; grid-template-rows: 241fr 322fr; gap: 2px; }
.view { position: relative; background: #fff; overflow: hidden; display: flex; justify-content: center; align-items: flex-start; }
.scene { position: absolute; inset: 0; width: 100%; height: 100%; }
.vtitle { position: relative; height: 20px; padding: 0 5px; border: 1px solid #c3cbe0; border-top: 0; background: #eaecf8; color: #5570a8; font: 11px/19px "Liberation Sans", Arial, sans-serif; white-space: nowrap; }
.vtitle.clear { background: #c1d3ea; border-color: #a6bcda; color: #7b99c9; }
.vtitle.pale { color: #a5b0cc; border-color: #dcdfec; background: #f3f4fb; padding: 0 6px; }
.orb { position: absolute; left: 5px; bottom: 5px; width: 16px; height: 16px; }
.vctl { position: absolute; right: 4px; top: 3px; display: flex; }

.dock { flex: none; height: 20px; padding: 1px 0 1px 3px; background: #eee; border-bottom: 1px solid #aaa; }
.dock div { width: 200px; height: 100%; border-left: 1px solid #bbb; border-right: 1px solid #aaa; }
.status { flex: none; height: 17px; padding: 4px 0 0 1px; overflow: hidden; background: #fff; display: grid; grid-template-columns: 627px 24px 121px 63px 151px 24px 53px 35px 37px 26px 31px 42px 19px 1fr; white-space: nowrap; color: #666; }
.status b { font-weight: normal; color: #111; }
.status .s { border-left: 1px solid #ddd; padding-left: 4px; }
.task { flex: none; height: 4px; background: #050505; padding-left: 208px; }
.task i { display: block; width: 41px; height: 4px; background: #333; }
```
